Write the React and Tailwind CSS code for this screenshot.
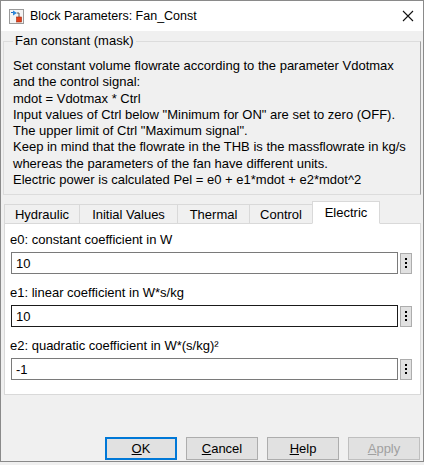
import React from "react";

const desc = [
  "Set constant volume flowrate according to the parameter Vdotmax",
  "and the control signal:",
  "mdot = Vdotmax * Ctrl",
  'Input values of Ctrl below "Minimum for ON" are set to zero (OFF).',
  'The upper limit of Ctrl "Maximum signal".',
  "Keep in mind that the flowrate in the THB is the massflowrate in kg/s",
  "whereas the parameters of the fan have different units.",
  "Electric power is calculated Pel = e0 + e1*mdot + e2*mdot^2",
];

const tabs = [
  { name: "Hydraulic", w: "w-[76px]" },
  { name: "Initial Values", w: "w-[99px]" },
  { name: "Thermal", w: "w-[73px]" },
  { name: "Control", w: "w-[64px]" },
  { name: "Electric", w: "w-[68px]", active: true },
];

const params = [
  { label: "e0: constant coefficient in W", value: "10" },
  { label: "e1: linear coefficient in W*s/kg", value: "10", focused: true },
  { label: "e2: quadratic coefficient in W*(s/kg)²", value: "-1" },
];

function BlockIcon() {
  return (
    <svg width="15" height="15" viewBox="0 0 15 15">
      <rect x="0.5" y="0.5" width="14" height="14" fill="#f4f4f4" stroke="#9a9a9a" />
      <path d="M2 3.5 H4" stroke="#1f6fc0" strokeWidth="1.2" />
      <path d="M4 1.5 L8 4 L4 6.5 Z" fill="#2b86d9" />
      <path d="M8 4 H10 V8" stroke="#555" strokeWidth="1" fill="none" />
      <rect x="7.5" y="8" width="5" height="5" fill="#e2401c" stroke="#a02a10" strokeWidth="0.6" />
    </svg>
  );
}

function DotsButton() {
  return (
    <div className="w-[12px] h-[21px] ml-[2px] bg-[#e1e1e1] border border-[#adadad] flex flex-col items-center justify-center gap-[2px]">
      <span className="w-[2px] h-[2px] bg-black" />
      <span className="w-[2px] h-[2px] bg-black" />
      <span className="w-[2px] h-[2px] bg-black" />
    </div>
  );
}

function Btn({ children, focus, disabled }) {
  return (
    <div
      className={
        "w-[72px] h-[23px] flex items-center justify-center bg-[#e1e1e1] text-[13px] " +
        (focus
          ? "border-2 border-[#0078d7]"
          : "border border-[#adadad]") +
        (disabled ? " text-[#a0a0a0] bg-[#cccccc] border-[#bfbfbf]" : " text-black")
      }
    >
      {children}
    </div>
  );
}

export default function App() {
  return (
    <div
      className="w-[424px] h-[465px] bg-[#f0f0f0] overflow-hidden text-black"
      style={{ fontFamily: '"Liberation Sans", Arial, sans-serif' }}
    >
      <div className="h-[462px] border border-[#8a8a8a] flex flex-col">
        {/* title bar */}
        <div className="h-[30px] bg-white flex items-center pl-[8px] pr-[8px] shrink-0">
          <BlockIcon />
          <span className="ml-[6px] text-[12.5px]">Block Parameters: Fan_Const</span>
          <svg className="ml-auto mr-[1px]" width="12" height="12" viewBox="0 0 12 12">
            <path d="M1 1 L11 11 M11 1 L1 11" stroke="#111" strokeWidth="1.1" />
          </svg>
        </div>

        {/* description group */}
        <fieldset className="mx-[2px] mt-[2px] border border-[#dcdcdc] border-r-[#a0a0a0] pl-[9px] pb-[6px] pt-0">
          <legend className="px-[2px] text-[13px] leading-[16px]">Fan constant (mask)</legend>
          <div className="mt-[9px] text-[13px] leading-[16.3px]">
            {desc.map((l) => (
              <div key={l} className="whitespace-nowrap">{l}</div>
            ))}
          </div>
        </fieldset>

        {/* tabs */}
        <div className="mt-[6px] ml-[3px] mr-[2px]">
          <div className="flex items-end h-[22px] pl-[1px]">
            {tabs.map((t) => (
              <div
                key={t.name}
                className={
                  "text-[13px] flex items-center justify-center border border-[#d9d9d9] -ml-px " +
                  t.w +
                  (t.active
                    ? " h-[23px] bg-white border-b-white relative z-10 mb-[-1px] pb-[1px]"
                    : " h-[19px] bg-[#f0f0f0] border-b-0")
                }
              >
                {t.name}
              </div>
            ))}
          </div>
          <div className="bg-white border border-[#d9d9d9] h-[172px] pl-[5px] pr-[8px] pt-[8px]">
            {params.map((p) => (
              <div key={p.label} className="mb-[11px]">
                <div className="text-[13px] leading-[16px] mb-[4px]">{p.label}</div>
                <div className="flex items-center pl-[1px]">
                  <div
                    className={
                      "flex-1 h-[22px] bg-white flex items-center pl-[4px] text-[13px] border " +
                      (p.focused ? "border-[#1a1a1a]" : "border-[#7a7a7a]")
                    }
                  >
                    {p.value}
                  </div>
                  <DotsButton />
                </div>
              </div>
            ))}
          </div>
        </div>

        {/* buttons */}
        <div className="mt-auto mb-[1px] flex justify-end gap-[9px] pr-[3px]">
          <Btn focus>
            <span><u>O</u>K</span>
          </Btn>
          <Btn>
            <span><u>C</u>ancel</span>
          </Btn>
          <Btn>
            <span><u>H</u>elp</span>
          </Btn>
          <Btn disabled>
            <span><u>A</u>pply</span>
          </Btn>
        </div>
      </div>
    </div>
  );
}
